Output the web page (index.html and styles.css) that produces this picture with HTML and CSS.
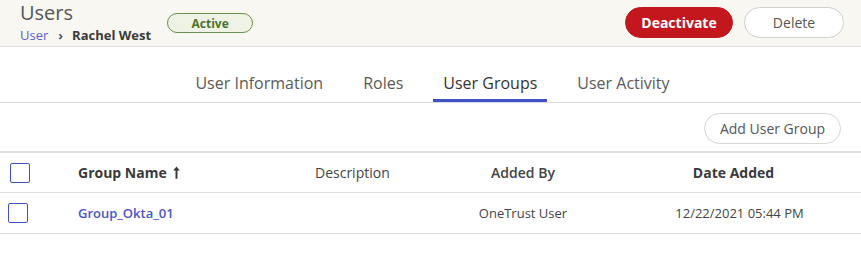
FILE: index.html
```html
<!DOCTYPE html>
<html>
<head>
<meta charset="utf-8">
<link rel="stylesheet" href="styles.css">
</head>
<body>
<header class="page-header">
  <div class="title-block">
    <h1 class="title">Users</h1>
    <div class="breadcrumb"><a class="crumb-link">User</a><span class="crumb-sep">&#8250;</span><span class="crumb-current">Rachel West</span></div>
  </div>
  <span class="badge-active">Active</span>
  <div class="header-actions">
    <button class="btn btn-danger">Deactivate</button>
    <button class="btn btn-outline">Delete</button>
  </div>
</header>
<nav class="tabs">
  <span class="tab">User Information</span>
  <span class="tab">Roles</span>
  <span class="tab tab-active">User Groups</span>
  <span class="tab">User Activity</span>
</nav>
<div class="toolbar">
  <button class="btn btn-light">Add User Group</button>
</div>
<div class="table">
  <div class="row row-head">
    <div class="cell cell-check"><span class="checkbox"></span></div>
    <div class="cell cell-name th-bold">Group Name <svg class="sort" width="7" height="13" viewBox="0 0 7 13"><path d="M3.5 0.5 L6.8 4.6 L4.5 4.6 L4.5 12.8 L2.5 12.8 L2.5 4.6 L0.2 4.6 Z" fill="#3a3a3a"/></svg></div>
    <div class="cell cell-desc th-regular">Description</div>
    <div class="cell cell-center th-semi">Added By</div>
    <div class="cell cell-center th-bold">Date Added</div>
  </div>
  <div class="row">
    <div class="cell cell-check"><span class="checkbox checkbox-row"></span></div>
    <div class="cell cell-name link">Group_Okta_01</div>
    <div class="cell cell-desc"></div>
    <div class="cell cell-center td">OneTrust User</div>
    <div class="cell cell-center td td-date">12/22/2021 05:44 PM</div>
  </div>
</div>
</body>
</html>
```
FILE: styles.css
```css
* { box-sizing: border-box; }
body {
  margin: 0;
  font-family: "Open Sans", "Noto Sans", sans-serif;
  background: #fff;
  color: #333;
}
.page-header {
  height: 47px;
  background: #f8f7f2;
  border-bottom: 1px solid #e2e2e2;
  display: flex;
  align-items: flex-start;
  padding: 0 17px 0 20px;
}
.title-block { display: flex; flex-direction: column; }
.title {
  margin: -1px 0 0 0;
  font-size: 20px;
  font-weight: 400;
  line-height: 27px;
  color: #555;
}
.breadcrumb {
  font-size: 13px;
  line-height: 18px;
  display: flex;
  align-items: center;
}
.crumb-link { color: #5b5fd3; }
.crumb-sep { color: #555; margin: 0 9px 0 10px; font-weight: 700; }
.crumb-current { font-weight: 700; color: #3a3a3a; }
.badge-active {
  margin: 13px 0 0 16px;
  width: 86px;
  height: 20px;
  border: 1px solid #6a9150;
  border-radius: 10px;
  background: #eef3e6;
  color: #4b7330;
  font-size: 12px;
  font-weight: 700;
  display: flex;
  align-items: center;
  justify-content: center;
}
.header-actions {
  margin-left: auto;
  margin-top: 7px;
  display: flex;
  gap: 11px;
}
.btn {
  font-family: inherit;
  font-size: 14px;
  height: 31px;
  border-radius: 16px;
  cursor: pointer;
}
.btn-danger {
  width: 108px;
  background: #c2171d;
  border: 1px solid #c2171d;
  color: #fff;
  font-weight: 700;
}
.btn-outline {
  width: 100px;
  background: #fff;
  border: 1px solid #cfcfcf;
  color: #555;
}
.tabs {
  display: flex;
  justify-content: center;
  gap: 20px;
  padding-top: 25px;
  padding-left: 4px;
  border-bottom: 1px solid #dcdcdc;
}
.tab {
  font-size: 16px;
  line-height: 22px;
  color: #5a5a5a;
  padding: 0 10px 5px;
  border-bottom: 3px solid transparent;
}
.tab-active {
  color: #333;
  border-bottom-color: #3f51c9;
}
.toolbar {
  display: flex;
  justify-content: flex-end;
  padding: 10px 20px 7px;
}
.btn-light {
  width: 137px;
  background: #fff;
  border: 1px solid #d6d6d6;
  color: #555;
}
.table { border-top: 2px solid #e3dede; }
.row {
  display: grid;
  grid-template-columns: 68px 237px 135px 166px 1fr;
  height: 41px;
  border-bottom: 1px solid #dddddd;
  align-items: center;
}
.row-head { height: 40px; }
.cell { font-size: 14px; }
.cell-check { padding-left: 10px; display: flex; }
.cell-name { padding-left: 10px; display: flex; align-items: center; }
.cell-desc { padding-left: 10px; }
.cell-center { text-align: center; }
.checkbox {
  width: 20px;
  height: 20px;
  border: 1.5px solid #3f51c9;
  border-radius: 2px;
  display: block;
}
.checkbox-row { margin-left: -2px; }
.th-bold { font-weight: 700; color: #3a3a3a; }
.th-semi { font-weight: 600; color: #444; }
.th-regular { font-weight: 400; color: #444; }
.sort { margin-left: 6px; margin-top: -1px; }
.link { color: #4a55c8; font-weight: 600; font-size: 13px; }
.td { font-size: 13px; color: #444; }
.td-date { padding-left: 12px; }
```
